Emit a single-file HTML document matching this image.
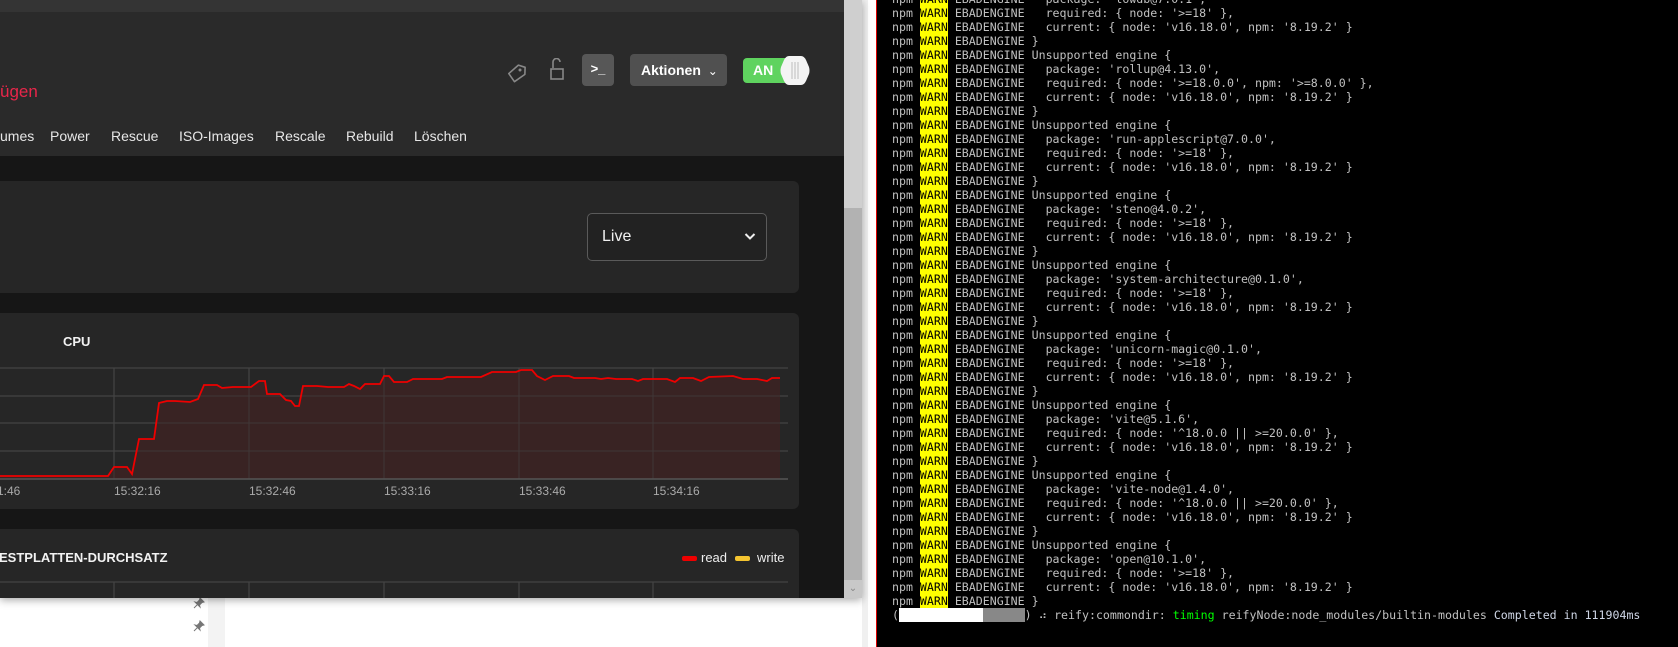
<!DOCTYPE html>
<html><head><meta charset="utf-8"><style>
*{margin:0;padding:0;box-sizing:border-box}
body{width:1678px;height:647px;overflow:hidden;background:#fff;position:relative;font-family:"Liberation Sans",sans-serif}
.abs{position:absolute}
#win{left:0;top:0;width:862px;height:598px;background:#161616;overflow:hidden;box-shadow:0 2px 8px rgba(0,0,0,.35)}
.card{position:absolute;background:#262626;border-radius:6px}
.tab{position:absolute;top:128px;color:#e6e6e6;font-size:14px}
#term{left:876px;top:0;width:802px;height:647px;background:#000;border-left:1px solid #d00;overflow:hidden}
#lines{position:absolute;left:15px;top:-8px;font-family:"DejaVu Sans Mono","Liberation Mono",monospace;font-size:11.6px;line-height:14px;color:#c0c0c0;white-space:pre}
.w{background:#ff0;color:#000}
</style></head><body>
<div class="abs" style="left:208px;top:598px;width:17px;height:49px;background:#f3f3f3"></div>
<svg class="abs" style="left:193px;top:597px" width="12" height="12" viewBox="0 0 12 12"><path d="M7 1 L11 5 L9 5.5 L6.5 8 L7 10 L2 5 L4 5.5 L6.5 3 Z M4.5 7.5 L1 11" fill="#777" stroke="#777" stroke-width="1"/></svg>
<svg class="abs" style="left:193px;top:620px" width="12" height="12" viewBox="0 0 12 12"><path d="M7 1 L11 5 L9 5.5 L6.5 8 L7 10 L2 5 L4 5.5 L6.5 3 Z M4.5 7.5 L1 11" fill="#777" stroke="#777" stroke-width="1"/></svg>
<div class="abs" style="left:862px;top:0;width:6px;height:647px;background:#f0f0f0"></div>

<div id="win" class="abs">
 <div class="abs" style="left:0;top:0;width:844px;height:12px;background:#343434"></div>
 <div class="abs" style="left:0;top:12px;width:844px;height:144px;background:#2a2a2a"></div>
 <div class="abs" style="left:0;top:82px;color:#e8264a;font-size:17px">ügen</div>
 <svg class="abs" style="left:506px;top:62px" width="22" height="22" viewBox="0 0 22 22"><path d="M11 3 L18 4 L19 11 L10 20 L3 13 Z" fill="none" stroke="#888" stroke-width="1.6" stroke-linejoin="round" transform="rotate(10 11 11)"/><circle cx="14" cy="8" r="1.5" fill="#888"/></svg>
 <svg class="abs" style="left:549px;top:58px" width="18" height="24" viewBox="0 0 18 24"><path d="M4 10 V4 a3.5 3.5 0 0 1 7 0" fill="none" stroke="#888" stroke-width="1.6"/><rect x="2" y="11" width="12" height="10" fill="none" stroke="#888" stroke-width="1.6"/></svg>
 <div class="abs" style="left:582px;top:54px;width:32px;height:32px;background:#575757;border-radius:4px;color:#fff;font-size:13px;font-weight:bold;text-align:center;line-height:30px">&gt;_</div>
 <div class="abs" style="left:630px;top:54px;width:97px;height:32px;background:#505050;border-radius:4px;color:#fff;font-size:14px;font-weight:bold;line-height:32px;padding-left:11px">Aktionen <span style="font-weight:normal;font-size:12px;margin-left:3px">⌄</span></div>
 <div class="abs" style="left:743px;top:58px;width:50px;height:25px;background:#5fd35f;border-radius:4px 0 0 4px;color:#fff;font-size:14px;font-weight:bold;line-height:25px;padding-left:10px">AN</div>
 <svg class="abs" style="left:780px;top:55px" width="30" height="31" viewBox="0 0 30 31"><path d="M9 1 H21 Q24 1 26 5 L29 12 Q30 15.5 29 19 L26 26 Q24 30 21 30 H9 Q6 30 4 26 L1 19 Q0 15.5 1 12 L4 5 Q6 1 9 1 Z" fill="#f4f4f4"/><path d="M12 7 V24 M15 7 V24 M18 7 V24" stroke="#bbb" stroke-width="1"/></svg>
 <div class="tab" style="left:0">umes</div>
 <div class="tab" style="left:50px">Power</div>
 <div class="tab" style="left:111px">Rescue</div>
 <div class="tab" style="left:179px">ISO-Images</div>
 <div class="tab" style="left:275px">Rescale</div>
 <div class="tab" style="left:346px">Rebuild</div>
 <div class="tab" style="left:414px">Löschen</div>

 <div class="card" style="left:-10px;top:181px;width:809px;height:112px">
  <div class="abs" style="left:597px;top:32px;width:180px;height:48px;border:1px solid #5a5a5a;border-radius:5px;background:#222;color:#f0f0f0;font-size:16px;line-height:46px;padding-left:14px">Live<svg class="abs" style="right:10px;top:18px" width="12" height="9" viewBox="0 0 12 9"><path d="M1.5 2 L6 6.5 L10.5 2" fill="none" stroke="#eee" stroke-width="2"/></svg></div>
 </div>

 <div class="card" style="left:-10px;top:313px;width:809px;height:196px"></div>
 <div class="abs" style="left:63px;top:334px;color:#f2f2f2;font-size:13px;font-weight:bold">CPU</div>
 <svg class="abs" style="left:0;top:360px" width="800" height="140" viewBox="0 360 800 140">
  <g stroke="#444" stroke-width="1.2">
   <line x1="0" y1="368" x2="788" y2="368"/><line x1="0" y1="396" x2="788" y2="396"/><line x1="0" y1="423" x2="788" y2="423"/><line x1="0" y1="451" x2="788" y2="451"/>
   <line x1="114" y1="368" x2="114" y2="479"/><line x1="249" y1="368" x2="249" y2="479"/><line x1="384" y1="368" x2="384" y2="479"/><line x1="519" y1="368" x2="519" y2="479"/><line x1="653" y1="368" x2="653" y2="479"/>
  </g>
  <polygon fill="#3a2323" fill-opacity="0.95" points="0,476 108,476 114,467 127,467 132,474 139,439 154,439 159,403 167,401 175,401 190,402 198,399 204,385 217,385 222,388 233,387 251,387 259,381 265,381 267,394 280,394 286,400 291,401 295,406 299,406 303,386 317,386 328,387 344,387 349,384 354,386 360,389 365,384 380,384 384,376 389,376 394,382 407,382 413,379 442,379 447,377 474,377 481,377 492,372 516,372 521,370 532,370 537,376 545,380 553,376 569,376 574,378 595,378 601,379 608,378 616,379 632,379 638,381 643,379 667,379 675,382 680,378 693,378 701,381 709,377 733,376 743,379 757,379 767,381 772,378 780,378 780,479 0,479"/>
  <g stroke="#444" stroke-width="1" opacity=".6">
   <line x1="0" y1="396" x2="780" y2="396"/><line x1="0" y1="423" x2="780" y2="423"/><line x1="0" y1="451" x2="780" y2="451"/>
   <line x1="114" y1="368" x2="114" y2="479"/><line x1="249" y1="368" x2="249" y2="479"/><line x1="384" y1="368" x2="384" y2="479"/><line x1="519" y1="368" x2="519" y2="479"/><line x1="653" y1="368" x2="653" y2="479"/>
  </g>
  <line x1="0" y1="479" x2="788" y2="479" stroke="#555" stroke-width="1.5"/>
  <polyline fill="none" stroke="#e00" stroke-width="1.8" points="0,476 108,476 114,467 127,467 132,474 139,439 154,439 159,403 167,401 175,401 190,402 198,399 204,385 217,385 222,388 233,387 251,387 259,381 265,381 267,394 280,394 286,400 291,401 295,406 299,406 303,386 317,386 328,387 344,387 349,384 354,386 360,389 365,384 380,384 384,376 389,376 394,382 407,382 413,379 442,379 447,377 474,377 481,377 492,372 516,372 521,370 532,370 537,376 545,380 553,376 569,376 574,378 595,378 601,379 608,378 616,379 632,379 638,381 643,379 667,379 675,382 680,378 693,378 701,381 709,377 733,376 743,379 757,379 767,381 772,378 780,378"/>
  <g fill="#aaa" font-family="Liberation Sans,sans-serif" font-size="12">
   <text x="-3" y="495">1:46</text><text x="114" y="495">15:32:16</text><text x="249" y="495">15:32:46</text><text x="384" y="495">15:33:16</text><text x="519" y="495">15:33:46</text><text x="653" y="495">15:34:16</text>
  </g>
 </svg>

 <div class="card" style="left:-10px;top:529px;width:809px;height:120px"></div>
 <div class="abs" style="left:-1px;top:550px;color:#f2f2f2;font-size:13px;font-weight:bold">ESTPLATTEN-DURCHSATZ</div>
 <div class="abs" style="left:682px;top:556px;width:15px;height:5px;background:#e00;border-radius:2px"></div>
 <div class="abs" style="left:701px;top:550px;color:#eee;font-size:13px">read</div>
 <div class="abs" style="left:735px;top:556px;width:15px;height:5px;background:#f4c430;border-radius:2px"></div>
 <div class="abs" style="left:757px;top:550px;color:#eee;font-size:13px">write</div>
 <svg class="abs" style="left:0;top:580px" width="800" height="20"><g stroke="#444" stroke-width="1.2"><line x1="0" y1="2" x2="788" y2="2"/><line x1="114" y1="2" x2="114" y2="20"/><line x1="249" y1="2" x2="249" y2="20"/><line x1="384" y1="2" x2="384" y2="20"/><line x1="519" y1="2" x2="519" y2="20"/><line x1="653" y1="2" x2="653" y2="20"/></g></svg>

 <div class="abs" style="left:844px;top:0;width:18px;height:208px;background:#cfcfcf"></div>
 <div class="abs" style="left:844px;top:208px;width:18px;height:390px;background:#b2b2b2"></div>
 <div class="abs" style="left:844px;top:580px;width:18px;height:18px;background:#c8c8c8;color:#888;font-size:10px;text-align:center;line-height:18px">⌄</div>
</div>

<div id="term" class="abs"><div id="lines">npm <span class="w">WARN</span> EBADENGINE   package: 'lowdb@7.0.1',
npm <span class="w">WARN</span> EBADENGINE   required: { node: '&gt;=18' },
npm <span class="w">WARN</span> EBADENGINE   current: { node: 'v16.18.0', npm: '8.19.2' }
npm <span class="w">WARN</span> EBADENGINE }
npm <span class="w">WARN</span> EBADENGINE Unsupported engine {
npm <span class="w">WARN</span> EBADENGINE   package: 'rollup@4.13.0',
npm <span class="w">WARN</span> EBADENGINE   required: { node: '&gt;=18.0.0', npm: '&gt;=8.0.0' },
npm <span class="w">WARN</span> EBADENGINE   current: { node: 'v16.18.0', npm: '8.19.2' }
npm <span class="w">WARN</span> EBADENGINE }
npm <span class="w">WARN</span> EBADENGINE Unsupported engine {
npm <span class="w">WARN</span> EBADENGINE   package: 'run-applescript@7.0.0',
npm <span class="w">WARN</span> EBADENGINE   required: { node: '&gt;=18' },
npm <span class="w">WARN</span> EBADENGINE   current: { node: 'v16.18.0', npm: '8.19.2' }
npm <span class="w">WARN</span> EBADENGINE }
npm <span class="w">WARN</span> EBADENGINE Unsupported engine {
npm <span class="w">WARN</span> EBADENGINE   package: 'steno@4.0.2',
npm <span class="w">WARN</span> EBADENGINE   required: { node: '&gt;=18' },
npm <span class="w">WARN</span> EBADENGINE   current: { node: 'v16.18.0', npm: '8.19.2' }
npm <span class="w">WARN</span> EBADENGINE }
npm <span class="w">WARN</span> EBADENGINE Unsupported engine {
npm <span class="w">WARN</span> EBADENGINE   package: 'system-architecture@0.1.0',
npm <span class="w">WARN</span> EBADENGINE   required: { node: '&gt;=18' },
npm <span class="w">WARN</span> EBADENGINE   current: { node: 'v16.18.0', npm: '8.19.2' }
npm <span class="w">WARN</span> EBADENGINE }
npm <span class="w">WARN</span> EBADENGINE Unsupported engine {
npm <span class="w">WARN</span> EBADENGINE   package: 'unicorn-magic@0.1.0',
npm <span class="w">WARN</span> EBADENGINE   required: { node: '&gt;=18' },
npm <span class="w">WARN</span> EBADENGINE   current: { node: 'v16.18.0', npm: '8.19.2' }
npm <span class="w">WARN</span> EBADENGINE }
npm <span class="w">WARN</span> EBADENGINE Unsupported engine {
npm <span class="w">WARN</span> EBADENGINE   package: 'vite@5.1.6',
npm <span class="w">WARN</span> EBADENGINE   required: { node: '^18.0.0 || &gt;=20.0.0' },
npm <span class="w">WARN</span> EBADENGINE   current: { node: 'v16.18.0', npm: '8.19.2' }
npm <span class="w">WARN</span> EBADENGINE }
npm <span class="w">WARN</span> EBADENGINE Unsupported engine {
npm <span class="w">WARN</span> EBADENGINE   package: 'vite-node@1.4.0',
npm <span class="w">WARN</span> EBADENGINE   required: { node: '^18.0.0 || &gt;=20.0.0' },
npm <span class="w">WARN</span> EBADENGINE   current: { node: 'v16.18.0', npm: '8.19.2' }
npm <span class="w">WARN</span> EBADENGINE }
npm <span class="w">WARN</span> EBADENGINE Unsupported engine {
npm <span class="w">WARN</span> EBADENGINE   package: 'open@10.1.0',
npm <span class="w">WARN</span> EBADENGINE   required: { node: '&gt;=18' },
npm <span class="w">WARN</span> EBADENGINE   current: { node: 'v16.18.0', npm: '8.19.2' }
npm <span class="w">WARN</span> EBADENGINE }
(<span style="background:#fff">            </span><span style="background:#888">      </span>) ⠴ reify:commondir: <span style="color:#0f0">timing</span> reifyNode:node_modules/builtin-modules <span style="color:#cfd6e6">Completed in 111904ms</span></div></div>
</body></html>
